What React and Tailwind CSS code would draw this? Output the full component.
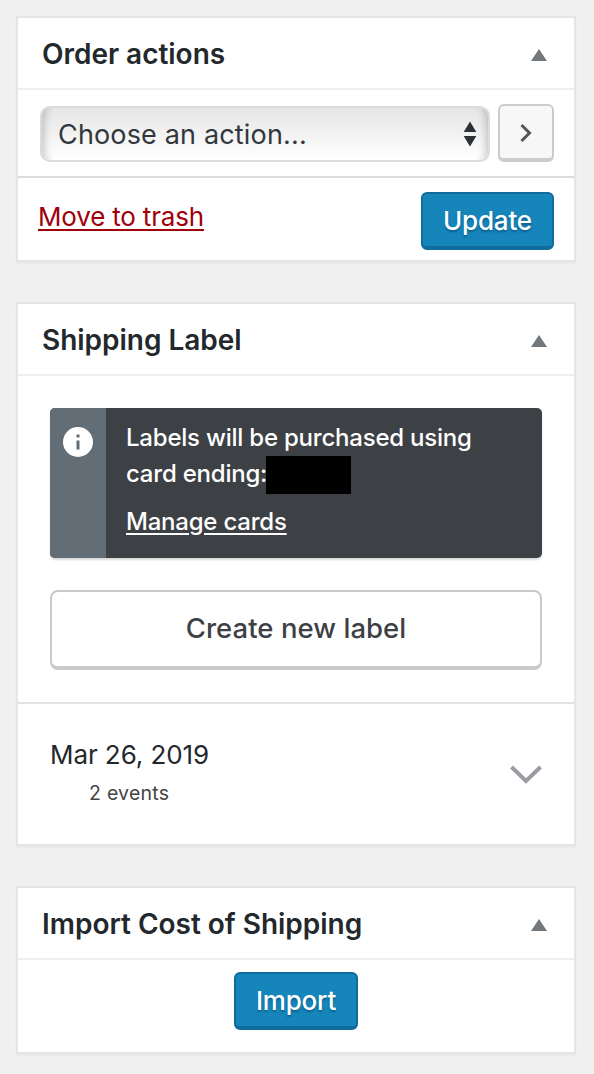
import React from "react";

function Panel({ title, className, children }) {
  return (
    <section
      className={`flex w-[560px] flex-col border-2 border-[#e5e5e5] bg-white shadow-[0_2px_2px_rgba(0,0,0,0.04)] ${className}`}
    >
      <header className="flex h-[72px] shrink-0 items-center justify-between border-b-2 border-[#eeeeee] pr-[27px] pl-6">
        <h2 className="pt-px text-[28px] leading-9 font-semibold tracking-[-0.02px] whitespace-nowrap text-[#23282d]">
          {title}
        </h2>
        <svg width="16" height="12" viewBox="0 0 16 12" className="mt-[3px] fill-[#72777c]" aria-hidden="true">
          <path d="M8 0 16 12H0Z" />
        </svg>
      </header>
      {children}
    </section>
  );
}

function PrimaryButton({ className, children }) {
  return (
    <button
      className={`h-[58px] rounded-[6px] border-2 border-b-4 border-[#0f6c9c] bg-[#1585ba] pt-0.5 text-[26px] leading-9 font-medium tracking-[-0.2px] whitespace-nowrap text-white [text-shadow:0_2px_2px_rgba(0,60,100,0.5)] ${className}`}
    >
      {children}
    </button>
  );
}

function ActionSelect() {
  return (
    <button className="flex h-14 w-[450px] items-center justify-between rounded-[10px] border-2 border-[#dcdcdc] bg-linear-to-b from-[#e5e5e5] to-white pr-[11px] pl-4 shadow-[inset_12px_0_8px_-10px_rgba(0,0,0,0.22),inset_-12px_0_8px_-10px_rgba(0,0,0,0.22)]">
      <span className="pt-0.5 text-[27px] leading-9 tracking-[0.16px] whitespace-nowrap text-[#32373c]">Choose an action...</span>
      <svg width="14" height="26" viewBox="0 0 14 26" className="fill-[#2b3036]" aria-hidden="true">
        <path d="M7 .5 13.3 11H.7ZM7 25.5.7 15h12.6Z" />
      </svg>
    </button>
  );
}

export default function App() {
  return (
    <main className="flex h-[1074px] w-[594px] flex-col gap-10 bg-[#f0f0f0] pt-4 pl-4 font-['Inter',sans-serif]">
      <Panel title="Order actions" className="h-[246px]">
        <div className="flex h-[88px] items-end gap-2 border-b-2 border-[#dddddd] pb-[14px] pl-[22px]">
          <ActionSelect />
          <button
            className="flex h-[58px] w-14 items-center justify-center rounded-[6px] border-2 border-b-4 border-[#cccccc] bg-[#f7f7f7]"
            aria-label="Apply"
          >
            <svg width="12" height="20" viewBox="0 0 12 20" fill="none" stroke="#555" strokeWidth="3" className="mt-0.5" aria-hidden="true">
              <path d="m1.5 2 8 8-8 8" />
            </svg>
          </button>
        </div>
        <div className="flex justify-between pt-[14px] pr-5 pl-5">
          <a className="mt-[7px] text-[26px] leading-9 tracking-[-0.18px] whitespace-nowrap text-[#a00009] underline decoration-2 underline-offset-[3px]">
            Move to trash
          </a>
          <PrimaryButton className="w-[133px]">Update</PrimaryButton>
        </div>
      </Panel>

      <Panel title="Shipping Label" className="h-[544px]">
        <div className="flex h-[328px] shrink-0 flex-col gap-8 border-b-2 border-[#e2e2e2] px-8 pt-8">
          <div className="flex h-[150px] shrink-0 overflow-hidden rounded-[5px] bg-[#3d4145] text-white shadow-[0_2px_2px_rgba(0,0,0,0.15)]">
            <div className="flex w-14 justify-center bg-[#636d75] pt-[19px]">
              <svg width="30" height="30" viewBox="0 0 30 30" aria-hidden="true">
                <circle cx="15" cy="15" r="15" fill="#fff" />
                <path d="M13.500 7.500h3v3h-3zM13.500 13.500h3v9h-3z" fill="#636d75" />
              </svg>
            </div>
            <div className="flex flex-col pt-3 pl-5 text-[24px] leading-9 font-[450] tracking-[-0.22px] whitespace-nowrap">
              <span>Labels will be purchased using</span>
              <span className="flex">
                <span className="w-[140px]">card ending:</span>
                <span className="h-[38px] w-[85px] bg-black" />
              </span>
              <a className="mt-[10px] underline decoration-2 underline-offset-[3px]">Manage cards</a>
            </div>
          </div>
          <button className="h-20 rounded-[8px] border-2 border-b-4 border-[#c8c9cb] bg-white pb-0.5 text-[27.5px] leading-9 font-medium tracking-[0.04px] whitespace-nowrap text-[#3d4145]">
            Create new label
          </button>
        </div>
        <div className="flex justify-between px-8 pt-[33px]">
          <div className="flex flex-col whitespace-nowrap">
            <span className="text-[26px] leading-9 tracking-[-0.08px] text-[#23282d]">Mar 26, 2019</span>
            <span className="mt-[8px] pl-[39px] text-[19.5px] leading-6 tracking-[0.25px] text-[#444]">2 events</span>
          </div>
          <svg width="32" height="20" viewBox="0 0 32 20" fill="none" stroke="#999da1" strokeWidth="4" className="mt-7" aria-hidden="true">
            <path d="M1.500 2 16 16 30.500 2" />
          </svg>
        </div>
      </Panel>

      <Panel title="Import Cost of Shipping" className="h-[168px]">
        <div className="flex justify-center pt-3">
          <PrimaryButton className="w-[124px]">Import</PrimaryButton>
        </div>
      </Panel>
    </main>
  );
}
